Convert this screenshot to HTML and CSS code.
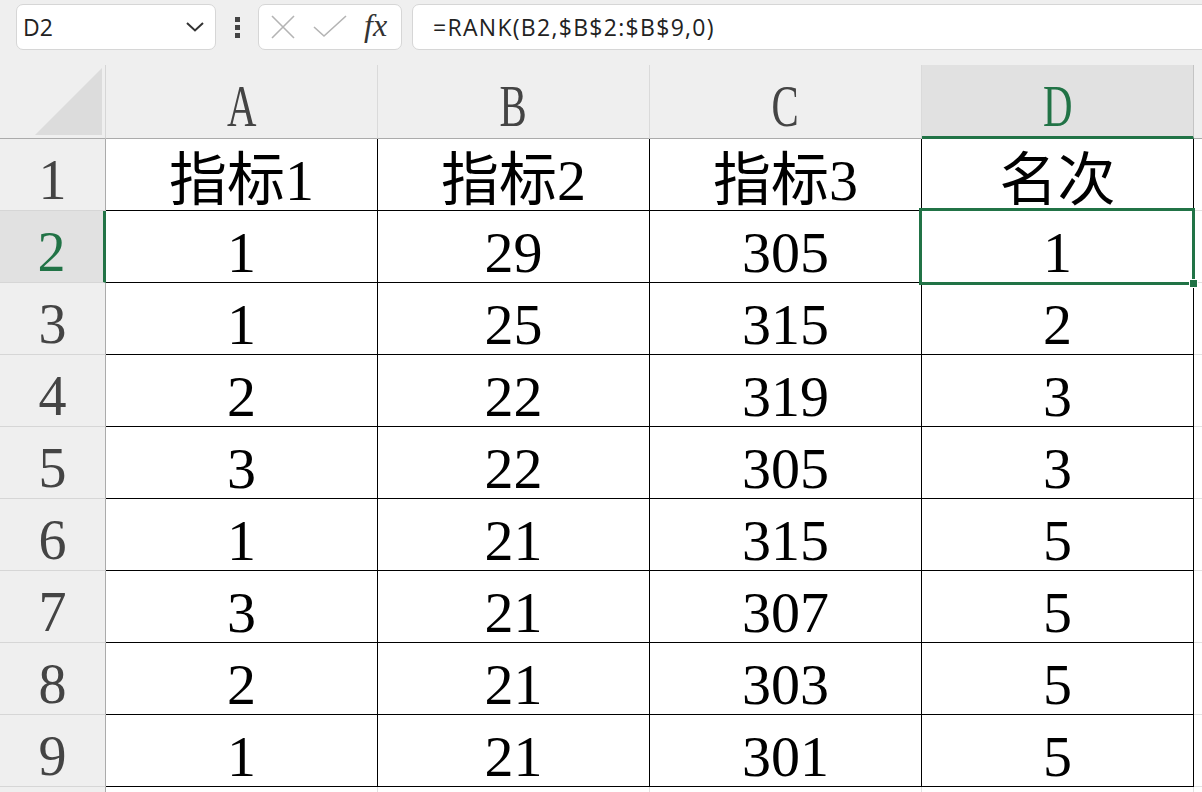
FILE: index.html
```html
<!DOCTYPE html>
<html lang="zh-CN">
<head>
    <meta charset="UTF-8">
    <title>RANK</title>
    <link rel="stylesheet" href="styles.css">
</head>
<body>
    <!-- 编辑栏 -->
    <div class="toolbar">
        <div class="name-box">
            <span>D2</span>
            <svg class="chevron" width="20" height="12" viewBox="0 0 20 12"><path d="M2 2 L10 9.5 L18 2" fill="none" stroke="#333" stroke-width="2"/></svg>
        </div>
        <div class="dots"><i></i><i></i><i></i></div>
        <div class="fx-box">
            <svg width="24" height="24" viewBox="0 0 24 24"><path d="M1 1 L23 23 M23 1 L1 23" stroke="#b4b4b4" stroke-width="1.6" fill="none"/></svg>
            <svg width="34" height="24" viewBox="0 0 34 24"><path d="M1 12 L11 21 L33 1" stroke="#b4b4b4" stroke-width="1.6" fill="none"/></svg>
            <span class="fx">fx</span>
        </div>
        <div class="formula">=RANK(B2,$B$2:$B$9,0)</div>
    </div>

    <!-- 表格 -->
    <div class="sheet">
        <div class="corner"><div class="tri"></div></div>
        <div class="col-head"><span>A</span></div>
        <div class="col-head"><span>B</span></div>
        <div class="col-head"><span>C</span></div>
        <div class="col-head active"><span>D</span></div>
        <div class="col-head rest"></div>

        <div class="row-head">1</div>
        <div class="cell">指标1</div><div class="cell">指标2</div><div class="cell">指标3</div><div class="cell">名次</div><div class="pad"></div>

        <div class="row-head active">2</div>
        <div class="cell">1</div><div class="cell">29</div><div class="cell">305</div>
        <div class="cell selected">1<div class="selection"><span class="handle"></span></div></div><div class="pad"></div>

        <div class="row-head">3</div>
        <div class="cell">1</div><div class="cell">25</div><div class="cell">315</div><div class="cell">2</div><div class="pad"></div>

        <div class="row-head">4</div>
        <div class="cell">2</div><div class="cell">22</div><div class="cell">319</div><div class="cell">3</div><div class="pad"></div>

        <div class="row-head">5</div>
        <div class="cell">3</div><div class="cell">22</div><div class="cell">305</div><div class="cell">3</div><div class="pad"></div>

        <div class="row-head">6</div>
        <div class="cell">1</div><div class="cell">21</div><div class="cell">315</div><div class="cell">5</div><div class="pad"></div>

        <div class="row-head">7</div>
        <div class="cell">3</div><div class="cell">21</div><div class="cell">307</div><div class="cell">5</div><div class="pad"></div>

        <div class="row-head">8</div>
        <div class="cell">2</div><div class="cell">21</div><div class="cell">303</div><div class="cell">5</div><div class="pad"></div>

        <div class="row-head">9</div>
        <div class="cell">1</div><div class="cell">21</div><div class="cell">301</div><div class="cell">5</div><div class="pad"></div>

        <!-- 第10行只露出一点边 -->
        <div class="row-head"></div>
        <div class="empty"></div><div class="empty"></div><div class="empty"></div><div class="empty"></div><div class="pad"></div>
    </div>
</body>
</html>
```

FILE: styles.css
```css
:root {
    --green: #217346;
    --head-bg: #efefef;
    --head-active: #e1e1e1;
    --head-line: #ababab;
}

* {
    margin: 0;
    padding: 0;
    box-sizing: border-box;
}

body {
    width: 1202px;
    height: 792px;
    overflow: hidden;
    background: var(--head-bg);
    font-family: "Liberation Serif", "Noto Sans CJK SC", serif;
}

/* 编辑栏 */
.toolbar {
    display: flex;
    align-items: center;
    height: 65px;
    padding: 4px 0 15px 16px;
    font-family: "Open Sans", "Noto Sans", sans-serif;
    color: #222;
}

.name-box {
    width: 200px;
    height: 46px;
    background: #fff;
    border: 1px solid #d6d6d6;
    border-radius: 7px;
    display: flex;
    align-items: center;
    justify-content: space-between;
    padding: 0 10px 0 6px;
    font-size: 23px;
}

.dots {
    display: flex;
    flex-direction: column;
    gap: 3px;
    margin: 0 18px 0 19px;
}

.dots i {
    width: 5px;
    height: 5px;
    background: #444;
}

.fx-box {
    width: 144px;
    height: 46px;
    background: #fff;
    border: 1px solid #d6d6d6;
    border-radius: 7px;
    display: flex;
    align-items: center;
    gap: 19px;
    padding-left: 12px;
}

.fx-box svg + svg {
    margin-left: -1px;
}

.fx {
    font-family: "Liberation Serif", serif;
    font-style: italic;
    font-size: 32px;
    color: #333;
    margin-left: -2px;
    margin-top: -4px;
}

.formula {
    flex: 1;
    height: 46px;
    margin-left: 10px;
    margin-right: -10px;
    background: #fff;
    border: 1px solid #d6d6d6;
    border-radius: 7px;
    display: flex;
    align-items: center;
    padding-left: 20px;
    font-size: 23px;
    letter-spacing: 1.3px;
}

/* 表格 */
.sheet {
    display: grid;
    grid-template-columns: 106px repeat(4, 272px) 1fr;
    grid-template-rows: 74px repeat(10, 72px);
}

.corner {
    background: var(--head-bg);
    border-right: 1px solid #d6d6d6;
    border-bottom: 1px solid var(--head-line);
    display: flex;
    justify-content: flex-end;
    align-items: flex-end;
    padding: 0 3px 3px 0;
}

.tri {
    width: 67px;
    height: 67px;
    background: #dcdcdc;
    clip-path: polygon(100% 0, 100% 100%, 0 100%);
}

.col-head {
    background: var(--head-bg);
    border-right: 1px solid #dadada;
    border-bottom: 1px solid var(--head-line);
    text-align: center;
    font-size: 60px;
    line-height: 59px;
    padding-top: 12px;
    color: #444;
}

/* 列标字母较窄 */
.col-head span {
    display: inline-block;
    transform: scaleX(0.68);
}

.col-head.active {
    background: var(--head-active);
    border-right-color: #c4c4c4;
    border-bottom: 3px solid var(--green);
    color: var(--green);
}

.col-head.rest {
    border-right: none;
}

.row-head {
    background: var(--head-bg);
    border-right: 1px solid var(--head-line);
    border-bottom: 1px solid #d6d6d6;
    text-align: center;
    font-size: 56px;
    line-height: 59px;
    padding-top: 12px;
    color: #444;
}

.row-head.active {
    background: var(--head-active);
    border-right: 3px solid var(--green);
    color: var(--green);
}

.cell {
    background: #fff;
    border-right: 1px solid #000;
    border-bottom: 1px solid #000;
    text-align: center;
    font-size: 58px;
    line-height: 59px;
    padding-top: 12px;
    color: #000;
}

.cell.selected {
    position: relative;
}

.selection {
    position: absolute;
    left: -3px;
    top: -3px;
    width: 276px;
    height: 77px;
    border: 3px solid var(--green);
}

.handle {
    position: absolute;
    right: -6px;
    bottom: -6px;
    width: 9px;
    height: 9px;
    background: var(--green);
    border: 1px solid #fff;
}

.pad {
    background: #fff;
    border-bottom: 1px solid #e1e1e1;
}

.empty {
    background: #fff;
    border-right: 1px solid #e1e1e1;
}
```
